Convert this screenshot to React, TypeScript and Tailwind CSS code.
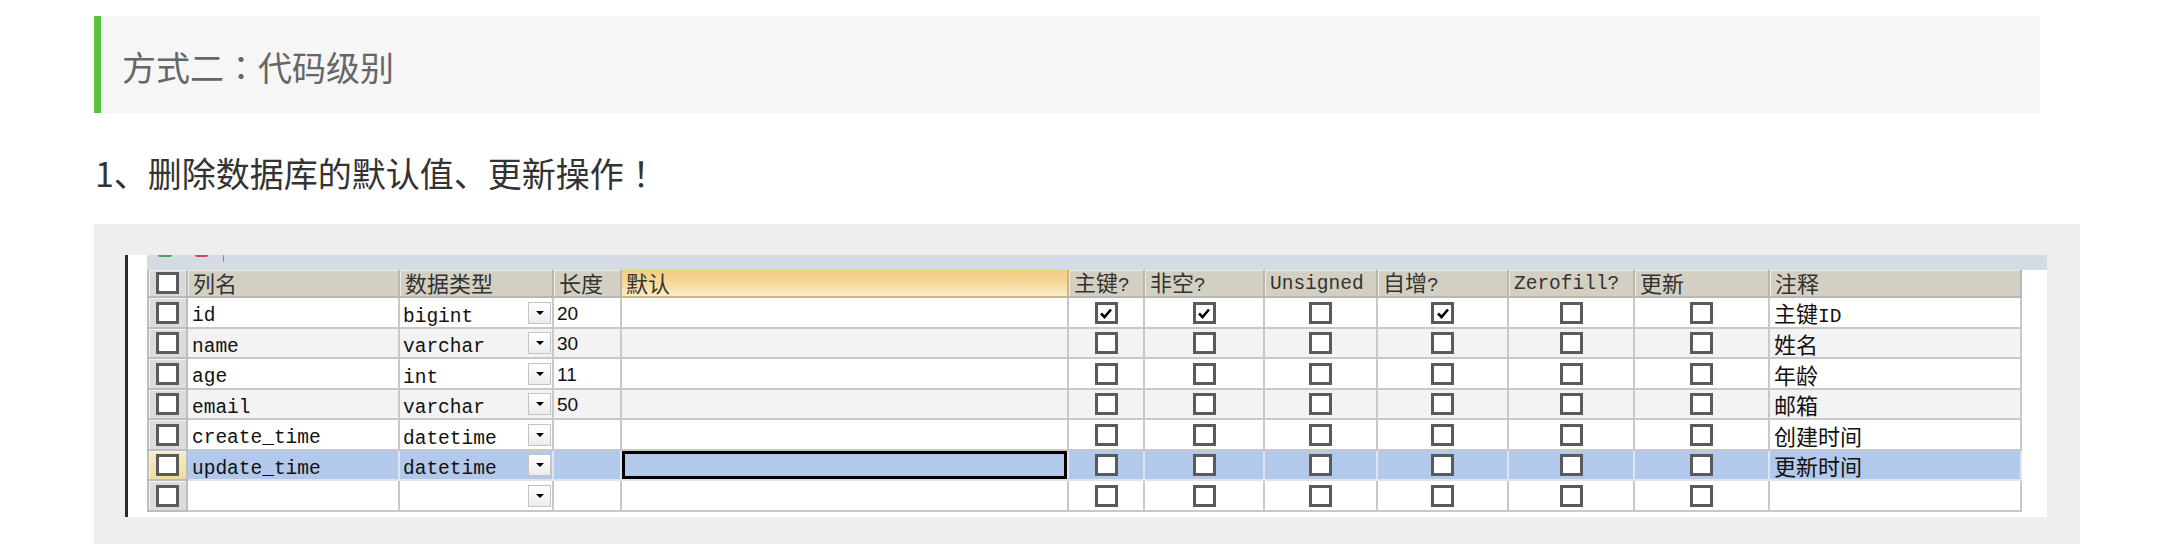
import React from "react";

const CJK = /[\u3000-\u9fff\uff00-\uffef]/;

function Txt({ s }: { s: string }) {
  const runs: { t: string; c: boolean }[] = [];
  for (const ch of s) {
    const c = CJK.test(ch);
    if (runs.length && runs[runs.length - 1].c === c) runs[runs.length - 1].t += ch;
    else runs.push({ t: ch, c });
  }
  if (!s) return null;
  return (
    <span className="whitespace-nowrap leading-[22px]">
      {runs.map((r, i) => (
        <span
          key={i}
          className={
            r.c
              ? "font-['Noto_Sans_CJK_SC',sans-serif] text-[22px]"
              : "font-['Liberation_Mono',monospace] text-[19.5px]"
          }
        >
          {r.t}
        </span>
      ))}
    </span>
  );
}

function Check({ on }: { on?: boolean }) {
  return (
    <div className="w-[23px] h-[22px] border-[3px] border-[#5a5a5a] bg-white flex items-center justify-center">
      {on && (
        <svg width="14" height="12" viewBox="0 0 14 12">
          <path d="M2 6.5 L5.5 10 L12 2.5" fill="none" stroke="#000" strokeWidth="2.6" />
        </svg>
      )}
    </div>
  );
}

function Drop() {
  return (
    <div className="ml-auto w-[23px] h-[22px] border border-[#c3c3c3] bg-[linear-gradient(#ffffff,#ececec)] flex items-center justify-center shrink-0">
      <div className="w-0 h-0 border-l-[4px] border-r-[4px] border-t-[4px] border-l-transparent border-r-transparent border-t-black" />
    </div>
  );
}

const COLS =
  "grid grid-cols-[39px_212px_154px_68px_447px_76px_120px_113px_131px_126px_135px_252px]";

type Row = {
  name: string;
  type: string;
  len: string;
  pk?: boolean;
  nn?: boolean;
  ai?: boolean;
  comment: string;
  h: string;
  alt?: boolean;
  sel?: boolean;
};

const rows: Row[] = [
  { name: "id", type: "bigint", len: "20", pk: true, nn: true, ai: true, comment: "主键ID", h: "h-[31px]" },
  { name: "name", type: "varchar", len: "30", comment: "姓名", h: "h-[30px]", alt: true },
  { name: "age", type: "int", len: "11", comment: "年龄", h: "h-[31px]" },
  { name: "email", type: "varchar", len: "50", comment: "邮箱", h: "h-[30px]", alt: true },
  { name: "create_time", type: "datetime", len: "", comment: "创建时间", h: "h-[31px]" },
  { name: "update_time", type: "datetime", len: "", comment: "更新时间", h: "h-[30px]", sel: true },
  { name: "", type: "", len: "", comment: "", h: "h-[31px]" },
];

const headers = ["列名", "数据类型", "长度", "默认", "主键?", "非空?", "Unsigned", "自增?", "Zerofill?", "更新", "注释"];

function Header() {
  const hc =
    "h-[28px] border-r-2 border-b-2 border-[#b9b8b0] bg-[#d3d0c3] shadow-[inset_1px_1px_0_#eeede6] flex items-center pl-[5px] text-[#333] whitespace-nowrap";
  return (
    <div className={COLS}>
      <div className="h-[28px] border-r-2 border-b-2 border-[#b9b9b9] bg-[#d9d9d9] shadow-[inset_1px_1px_0_#f2f2f2] flex items-center justify-center">
        <Check />
      </div>
      {headers.map((h, i) =>
        h === "默认" ? (
          <div
            key={i}
            className="h-[28px] border-r-2 border-b-2 border-[#c9b58c] bg-[linear-gradient(to_bottom,#f4cd82,#f6d696_45%,#fcecc9)] flex items-center pl-[4px] text-[#333] whitespace-nowrap"
          >
            <Txt s={h} />
          </div>
        ) : (
          <div key={i} className={hc}>
            <Txt s={h} />
          </div>
        )
      )}
    </div>
  );
}

function DataRow({ r }: { r: Row }) {
  const bg = r.sel ? "bg-[#b3c9eb]" : r.alt ? "bg-[#f3f3f3]" : "bg-white";
  const bd = r.sel ? "border-[#dbe5f4]" : "border-[#c8c8c8]";
  const cell = `${r.h} border-r-2 border-b-2 ${bd} ${bg} flex items-center whitespace-nowrap text-[#111]`;
  const ck = `${r.h} border-r-2 border-b-2 ${bd} ${bg} flex items-center justify-center`;
  return (
    <div className={COLS}>
      <div
        className={`${r.h} border-r-2 border-b-2 border-[#bdbdbd] flex items-center justify-center shadow-[inset_1px_1px_0_#f4f4f4] ${
          r.sel ? "bg-[linear-gradient(to_bottom,#f8edc8,#f1dc9f)]" : "bg-[#dcdcdc]"
        }`}
      >
        <Check />
      </div>
      <div className={`${cell} pl-[4px] pt-[5px]`}>
        <Txt s={r.name} />
      </div>
      <div className={`${cell} pl-[3px] pr-[1px]`}>
        <span className="pt-[5px]">
          <Txt s={r.type} />
        </span>
        <Drop />
      </div>
      <div className={`${cell} pl-[3px] pt-[3px] font-['Liberation_Sans',sans-serif] text-[19px]`}>{r.len}</div>
      <div className={`${r.h} border-r-2 border-b-2 ${bd} ${bg}`}>
        {r.sel && <div className="w-full h-full border-[3px] border-black" />}
      </div>
      <div className={ck}>
        <Check on={r.pk} />
      </div>
      <div className={ck}>
        <Check on={r.nn} />
      </div>
      <div className={ck}>
        <Check />
      </div>
      <div className={ck}>
        <Check on={r.ai} />
      </div>
      <div className={ck}>
        <Check />
      </div>
      <div className={ck}>
        <Check />
      </div>
      <div className={`${cell} pl-[4px] pt-[3px]`}>
        <Txt s={r.comment} />
      </div>
    </div>
  );
}

export default function App() {
  return (
    <div className="w-[2161px] h-[544px] bg-white overflow-hidden pt-[16px] pl-[94px] font-['Noto_Sans_CJK_SC',sans-serif]">
      <div className="w-[1946px] h-[97px] bg-[#f6f6f6] border-l-[7px] border-[#5dc33f] flex items-center pl-[21px] pt-[4px] text-[34px] text-[#666]">
        <span>
          方式二<span className="font-['Noto_Sans_CJK_TC',sans-serif]">：</span>代码级别
        </span>
      </div>
      <div className="mt-[34px] h-[50px] flex items-center text-[34px] text-[#333] pl-px">
        <span>
          1、删除数据库的默认值、更新操作<span className="font-['Noto_Sans_CJK_TC',sans-serif]">！</span>
        </span>
      </div>
      <div className="mt-[27px] w-[1986px] h-[320px] bg-[#eeeeee] pt-[31px] pl-[31px]">
        <div className="flex w-[1922px] h-[262px] bg-white">
          <div className="w-[3px] bg-[#2b2b2b]" />
          <div className="w-[19px]" />
          <div className="flex-1 flex flex-col">
            <div className="h-[15px] bg-[#d5dbe4] flex items-start">
              <div className="ml-[11px] w-[14px] h-[2px] bg-[#45a845] rounded-b" />
              <div className="ml-[23px] w-[13px] h-[2px] bg-[#d04848] rounded-b" />
              <div className="ml-[15px] w-px h-[7px] bg-[#8a8f98]" />
            </div>
            <div className="flex">
              <div className="border-l-2 border-[#bcbcbc]">
                <Header />
                {rows.map((r, i) => (
                  <DataRow key={i} r={r} />
                ))}
              </div>
            </div>
          </div>
        </div>
      </div>
    </div>
  );
}
